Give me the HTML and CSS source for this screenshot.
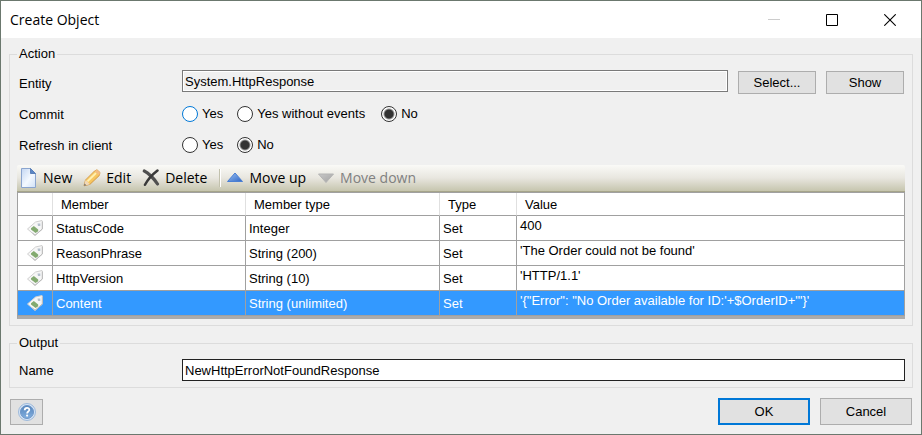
FILE: index.html
```html
<!DOCTYPE html>
<html lang="en">
<head>
<meta charset="utf-8">
<meta name="viewport" content="width=device-width, initial-scale=1">
<title>Create Object</title>
<link rel="stylesheet" href="styles.css">
</head>
<body>
<svg class="defs" aria-hidden="true">
  <defs>
    <linearGradient id="page" x1="0" y1="0" x2="1" y2="1"><stop offset="0" stop-color="#c3d6f2"/><stop offset=".55" stop-color="#f4f9ff"/><stop offset="1" stop-color="#cfe0f7"/></linearGradient>
    <linearGradient id="blue" x1="0" y1="0" x2="1" y2="1"><stop offset="0" stop-color="#9cc3f5"/><stop offset="1" stop-color="#2f66c4"/></linearGradient>
    <linearGradient id="grey" x1="0" y1="0" x2="1" y2="1"><stop offset="0" stop-color="#c8c8c8"/><stop offset="1" stop-color="#a2a2a2"/></linearGradient>
    <linearGradient id="pencil" x1="0" y1="0" x2="1" y2="1"><stop offset="0" stop-color="#ffe28a"/><stop offset="1" stop-color="#f0b040"/></linearGradient>
    <linearGradient id="help" x1="0" y1="0" x2="0" y2="1"><stop offset="0" stop-color="#5584bb"/><stop offset="1" stop-color="#83b0e0"/></linearGradient>
    <symbol id="tag" viewBox="0 0 16 16">
      <path d="M.5 9 8.500 2l6.500-1.500.5 1V9L8 15.500z" fill="#f6f6f6" stroke="#cfcfcf"/>
      <path d="M15.300 1.500V9L8 15.300 5.500 13" fill="none" stroke="#b9b9b9"/>
      <path d="M4 8.300 6.800 6l4.400 3.600v1.600L8.600 13 4 9.600z" fill="#83aa70"/>
      <path d="M10.500 3.500h2.800v2.600h-2.300z" fill="#b4c0cc"/>
    </symbol>
  </defs>
</svg>
<form class="dialog">
  <header class="titlebar">
    <h1 class="title">Create Object</h1>
    <button class="winbtn" type="button" aria-label="Minimize" disabled><svg width="12" height="12" viewBox="0 0 12 12"><path d="M0 5.500h12" stroke="#ccc"/></svg></button>
    <button class="winbtn" type="button" aria-label="Maximize"><svg width="12" height="12" viewBox="0 0 12 12"><path d="M.5.5h11v11H.5z" fill="none" stroke="#000"/></svg></button>
    <button class="winbtn" type="button" aria-label="Close"><svg width="12" height="12" viewBox="0 0 12 12"><path d="M.3.3l11.400 11.400M11.700.3.3 11.700" stroke="#000" stroke-width="1.100"/></svg></button>
  </header>

  <main class="content">
    <fieldset class="group">
      <legend>Action</legend>
      <div class="rows">
        <div class="row row-entity">
          <label class="label" for="entity">Entity</label>
          <input class="text readonly" id="entity" type="text" value="System.HttpResponse" readonly>
          <button class="button" type="button">Select...</button>
          <button class="button" type="button">Show</button>
        </div>
        <div class="row" role="radiogroup" aria-labelledby="commit">
          <span class="label" id="commit">Commit</span>
          <label class="option"><input class="hot" type="radio" name="commit">Yes</label>
          <label class="option wide"><input type="radio" name="commit">Yes without events</label>
          <label class="option"><input type="radio" name="commit" checked>No</label>
        </div>
        <div class="row" role="radiogroup" aria-labelledby="refresh">
          <span class="label" id="refresh">Refresh in client</span>
          <label class="option"><input type="radio" name="refresh">Yes</label>
          <label class="option"><input type="radio" name="refresh" checked>No</label>
        </div>
      </div>

      <div class="toolbar" role="toolbar">
        <button class="tool" type="button">
          <svg width="18" height="20" viewBox="0 0 18 20"><path d="M1.500.5h9l5 5v14h-14z" fill="url(#page)" stroke="#8ba5cf"/><path d="M10.500.5v5h5z" fill="#5b87c6" stroke="#5b80b8"/></svg>New</button>
        <button class="tool" type="button">
          <svg width="18" height="18" viewBox="0 0 18 18"><path d="M1 16.800 2.500 11 11.500 2l2.500-1.200L17 3.500 16.300 6.500 7 15.300z" fill="url(#pencil)" stroke="#cf9440" stroke-width=".9"/><path d="M11.500 2 14 .8 17 3.500l-.7 3z" fill="#f3bc84"/><path d="M2.500 11 1 16.800 7 15.300z" fill="#f0d8b8"/><path d="M1.600 14.500 1 16.800l2.300-.6z" fill="#666"/><path d="M4.500 12.300 13 4.200" stroke="#fff1b5" stroke-width="1.800"/></svg>Edit</button>
        <button class="tool" type="button">
          <svg width="18" height="18" viewBox="0 0 18 18"><path d="M2.300 2C6 3.500 12 9.500 15.500 15" fill="none" stroke="#505050" stroke-width="3.200" stroke-linecap="round"/><path d="M15.500 1.500C11 5 6 10 3 15.800" fill="none" stroke="#3a3a3a" stroke-width="2.500" stroke-linecap="round"/></svg>Delete</button>
        <span class="divider"></span>
        <button class="tool" type="button">
          <svg width="18" height="18" viewBox="0 0 18 18"><path d="M9 4 16.500 12.500H1.500z" fill="url(#blue)" stroke="#4a7fd3" stroke-linejoin="round"/></svg>Move up</button>
        <button class="tool" type="button" disabled>
          <svg width="18" height="18" viewBox="0 0 18 18"><path d="M1.500 5h15L9 13.500z" fill="url(#grey)" stroke="#b4b4b4" stroke-linejoin="round"/></svg>Move down</button>
      </div>

      <table class="members">
        <colgroup><col class="c-icon"><col class="c-member"><col class="c-kind"><col class="c-type"><col></colgroup>
        <thead>
          <tr><th></th><th>Member</th><th>Member type</th><th>Type</th><th>Value</th></tr>
        </thead>
        <tbody>
          <tr><td class="icon"><svg width="16" height="16"><use href="#tag"/></svg></td><td>StatusCode</td><td>Integer</td><td>Set</td><td class="value">400</td></tr>
          <tr><td class="icon"><svg width="16" height="16"><use href="#tag"/></svg></td><td>ReasonPhrase</td><td>String (200)</td><td>Set</td><td class="value">'The Order could not be found'</td></tr>
          <tr><td class="icon"><svg width="16" height="16"><use href="#tag"/></svg></td><td>HttpVersion</td><td>String (10)</td><td>Set</td><td class="value">'HTTP/1.1'</td></tr>
          <tr class="selected"><td class="icon"><svg width="16" height="16"><use href="#tag"/></svg></td><td>Content</td><td>String (unlimited)</td><td>Set</td><td class="value">'{"Error": "No Order available for ID:'+$OrderID+'"}'</td></tr>
        </tbody>
      </table>
    </fieldset>

    <fieldset class="group">
      <legend>Output</legend>
      <div class="row output">
        <label class="label" for="name">Name</label>
        <input class="text" id="name" type="text" value="NewHttpErrorNotFoundResponse">
      </div>
    </fieldset>
  </main>

  <footer class="footer">
    <button class="help" type="button" aria-label="Help">
      <svg width="18" height="18" viewBox="0 0 18 18"><circle cx="9" cy="9" r="8.500" fill="#d5e4f5" stroke="#9db9db"/><circle cx="9" cy="9" r="6.500" fill="url(#help)" stroke="#6d96c8"/><path d="M6.700 7.300C6.700 4 11.500 4.200 11.300 7c-.1 1.500-2.200 1.600-2.200 3.400" fill="none" stroke="#fff" stroke-width="1.800"/><circle cx="9.100" cy="12.600" r="1.100" fill="#fff"/></svg>
    </button>
    <button class="button large default" type="submit">OK</button>
    <button class="button large" type="button">Cancel</button>
  </footer>
</form>
</body>
</html>
```
FILE: styles.css
```css
* { box-sizing: border-box; }

body {
  margin: 0;
  background: #f0f0f0;
  color: #000;
  font: 13px/16px "Liberation Sans", Arial, sans-serif;
}

button, input { font: inherit; color: inherit; margin: 0; }

.defs { position: absolute; width: 0; height: 0; }

.dialog {
  display: flex;
  flex-direction: column;
  min-height: 100vh;
  border: 1px solid #6b786e;
}

/* Title bar */
.titlebar {
  display: flex;
  align-items: center;
  height: 37px;
  padding: 0 2px 0 9px;
  background: #fff;
}
.title {
  flex: 1;
  margin: 0;
  font: 14px/20px "Open Sans", "Noto Sans", sans-serif;
}
.winbtn {
  display: flex;
  align-items: center;
  justify-content: center;
  width: 58px;
  height: 36px;
  padding: 0;
  border: 0;
  background: none;
}

/* Groups and form rows */
.content {
  display: flex;
  flex-direction: column;
  gap: 9px;
  padding: 8px 8px 0;
}
.group {
  min-width: 0;
  margin: 0;
  padding: 8px 7px 6px;
  border: 1px solid #dcdcdc;
}
.group legend { padding: 0 2px; }

.rows {
  display: flex;
  flex-direction: column;
  gap: 7px;
  margin-bottom: 8px;
}
.row {
  display: flex;
  align-items: center;
  height: 24px;
  padding: 0 1px 0 2px;
}
.row-entity { height: 25px; gap: 10px; }
.row.output { height: 22px; padding-right: 0; }
.label { flex: none; width: 163px; padding-top: 2px; }
.row-entity .label { margin-right: -10px; }

.text {
  flex: 1;
  min-width: 0;
  height: 22px;
  padding: 0 2px;
  border: 1px solid #222;
  border-radius: 0;
  background: #fff;
  outline: 0;
}
.readonly {
  align-self: flex-start;
  border-color: #7a7a7a;
  background: #f0f0f0;
  box-shadow: inset 0 0 0 1px #fff;
}

.option {
  display: flex;
  align-items: center;
  gap: 4px;
  margin-right: 14px;
}
.option.wide { margin-right: 16px; }
.option input {
  appearance: none;
  width: 16px;
  height: 16px;
  border: 1px solid #333;
  border-radius: 50%;
  background: #fff;
}
.option input:checked { background: radial-gradient(circle closest-side, #333 0 4px, #fff 6px); }
.option .hot { border-color: #0078d7; }

.button {
  width: 78px;
  height: 23px;
  padding: 0;
  border: 1px solid #adadad;
  background: #e1e1e1;
}

/* Toolbar */
.toolbar {
  display: flex;
  align-items: center;
  gap: 11px;
  height: 27px;
  padding-left: 3px;
  border-bottom: 1px solid #a6a58a;
  border-radius: 2px 2px 0 0;
  background: linear-gradient(#fafaf7, #e8e6df 50%, #c6c5ae);
}
.tool {
  display: flex;
  align-items: center;
  gap: 5px;
  padding: 0;
  border: 0;
  background: none;
  font: 14px/20px "Open Sans", "Noto Sans", sans-serif;
}
.tool:disabled { color: #808080; }
.divider {
  width: 2px;
  height: 18px;
  margin: 0 -6px 0 1px;
  border-left: 1px solid #c2c1ad;
  border-right: 1px solid #fff;
}

/* Member table */
.members {
  width: 100%;
  table-layout: fixed;
  border-spacing: 0;
  border: solid #a0a0a0;
  border-width: 1px 0 0 1px;
  border-bottom: 3px solid #ababab;
  background: #fff;
}
.c-icon { width: 35px; }
.c-member { width: 193px; }
.c-kind { width: 194px; }
.c-type { width: 77px; }
.members th {
  height: 23px;
  padding: 2px 8px 0;
  border-right: 1px solid #e0e0e0;
  border-bottom: 1px solid #a0a0a0;
  font-weight: normal;
  text-align: left;
}
.members td {
  height: 25px;
  padding: 2px 3px 0;
  border-right: 1px solid #a0a0a0;
  border-bottom: 1px solid #a0a0a0;
  white-space: nowrap;
}
.members th:last-child { border-right-color: #a0a0a0; }
.members .icon { padding: 0; text-align: center; }
.members .icon svg { display: block; margin: 0 auto; }
.members .value { padding-top: 2px; vertical-align: top; }
.members .selected { background: #3399ff; color: #fff; }

/* Footer */
.footer {
  display: flex;
  align-items: center;
  gap: 10px;
  padding: 10px 9px 9px;
}
.help {
  display: flex;
  align-items: center;
  justify-content: center;
  width: 33px;
  height: 26px;
  margin-right: auto;
  padding: 0;
  border: 1px solid #adadad;
  background: #e1e1e1;
}
.button.large { width: 92px; height: 27px; }
.button.default { border: 2px solid #0078d7; }
```
